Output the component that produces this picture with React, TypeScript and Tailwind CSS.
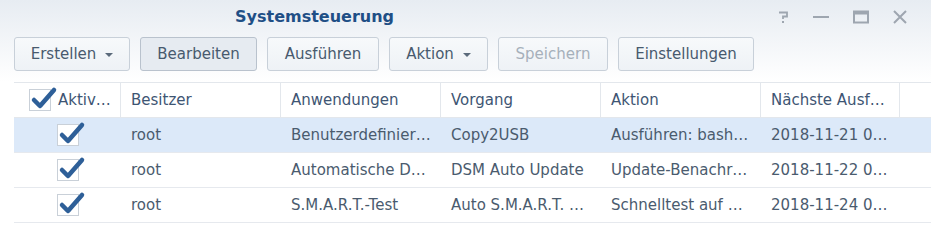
import React from 'react';

const Check = () => (
  <span className="relative inline-block w-[22px] h-[22px] border border-[#c9d0d8] bg-white shrink-0">
    <svg className="absolute left-[1px] top-[-4px] overflow-visible" width="24" height="24" viewBox="0 0 24 24">
      <path d="M3 14 L9 20 L23 4" fill="none" stroke="#2e5f98" strokeWidth="4.5" strokeLinejoin="round" strokeLinecap="round" />
    </svg>
  </span>
);

const Caret = () => <span className="ml-[9px] inline-block w-0 h-0 border-l-[4px] border-r-[4px] border-t-[4px] border-l-transparent border-r-transparent border-t-[#5b6a7b] translate-y-[1px]" />;

function Btn({ label, w, caret, active, disabled }: { label: string; w: string; caret?: boolean; active?: boolean; disabled?: boolean }) {
  return (
    <button
      className={`${w} h-[34px] flex items-center justify-center rounded-[3px] border text-[15px] ${
        active ? 'bg-[#e6ebf1] border-[#b9c2cd]' : 'bg-gradient-to-b from-[#f7f9fb] to-[#eef2f6] border-[#c8d0d9]'
      } ${disabled ? 'text-[#a6b0bb]' : 'text-[#485a6e]'}`}
    >
      {label}
      {caret && <Caret />}
    </button>
  );
}

const rows = [
  { owner: 'root', app: 'Benutzerdefinier…', task: 'Copy2USB', action: 'Ausführen: bash…', next: '2018-11-21 0…', sel: true },
  { owner: 'root', app: 'Automatische D…', task: 'DSM Auto Update', action: 'Update-Benachr…', next: '2018-11-22 0…' },
  { owner: 'root', app: 'S.M.A.R.T.-Test', task: 'Auto S.M.A.R.T. …', action: 'Schnelltest auf …', next: '2018-11-24 0…' },
];

const cols = 'grid grid-cols-[107px_160px_160px_160px_160px_139px_1fr]';

export default function App() {
  return (
    <div className="w-[931px] h-[252px] bg-white overflow-hidden font-['DejaVu_Sans',sans-serif]">
      <div className="bg-gradient-to-b from-[#e7ecf2] to-white">
        {/* Title bar */}
        <div className="h-[33px] flex items-center">
          <div className="pl-[235px] text-[16px] font-bold text-[#1f4f86]">Systemsteuerung</div>
          <div className="ml-auto flex items-center gap-[24px] pr-[24px]">
            <svg width="12" height="14" viewBox="0 0 12 14">
              <path d="M2 2.5 L10 2.5 L10 6.5 L6 6.5 L6 9" fill="none" stroke="#9ea6b0" strokeWidth="1.8" />
              <rect x="5" y="11" width="2" height="2" fill="#9ea6b0" />
            </svg>
            <svg width="16" height="14" viewBox="0 0 16 14"><rect x="0" y="6" width="16" height="2" fill="#9ea6b0" /></svg>
            <svg width="16" height="14" viewBox="0 0 16 14">
              <rect x="1" y="1.5" width="14" height="11" fill="none" stroke="#9ea6b0" strokeWidth="2" />
              <rect x="1" y="1.5" width="14" height="3" fill="#9ea6b0" />
            </svg>
            <svg width="14" height="14" viewBox="0 0 14 14">
              <path d="M1 1 L13 13 M13 1 L1 13" stroke="#9ea6b0" strokeWidth="2" />
            </svg>
          </div>
        </div>
        {/* Toolbar */}
        <div className="flex gap-[10px] px-[14px] pt-[4px] pb-[11px]">
          <Btn label="Erstellen" w="w-[116px]" caret />
          <Btn label="Bearbeiten" w="w-[117px]" active />
          <Btn label="Ausführen" w="w-[112px]" />
          <Btn label="Aktion" w="w-[99px]" caret />
          <Btn label="Speichern" w="w-[110px]" disabled />
          <Btn label="Einstellungen" w="w-[136px]" />
        </div>
      </div>

      {/* Table */}
      <div className="ml-[14px] text-[15px]">
        <div className={`${cols} h-[36px] border-t border-b border-[#e3e7ec] text-[#3e5573]`}>
          <div className="flex items-center pl-[15px] gap-[7px] border-r border-[#e3e7ec]">
            <Check />
            <span>Aktiv…</span>
          </div>
          {['Besitzer', 'Anwendungen', 'Vorgang', 'Aktion', 'Nächste Ausf…'].map((h) => (
            <div key={h} className="flex items-center pl-[10px] border-r border-[#e3e7ec]">{h}</div>
          ))}
          <div />
        </div>
        {rows.map((r, i) => (
          <div key={i} className={`${cols} h-[35px] border-b border-[#e6e9ee] text-[#4a5b6e] ${r.sel ? 'bg-[#dce9f9]' : ''}`}>
            <div className="flex items-center justify-center"><Check /></div>
            <div className="flex items-center pl-[10px]">{r.owner}</div>
            <div className="flex items-center pl-[10px] whitespace-nowrap">{r.app}</div>
            <div className="flex items-center pl-[10px] whitespace-nowrap">{r.task}</div>
            <div className="flex items-center pl-[10px] whitespace-nowrap">{r.action}</div>
            <div className="flex items-center pl-[10px] whitespace-nowrap">{r.next}</div>
            <div />
          </div>
        ))}
      </div>
    </div>
  );
}
